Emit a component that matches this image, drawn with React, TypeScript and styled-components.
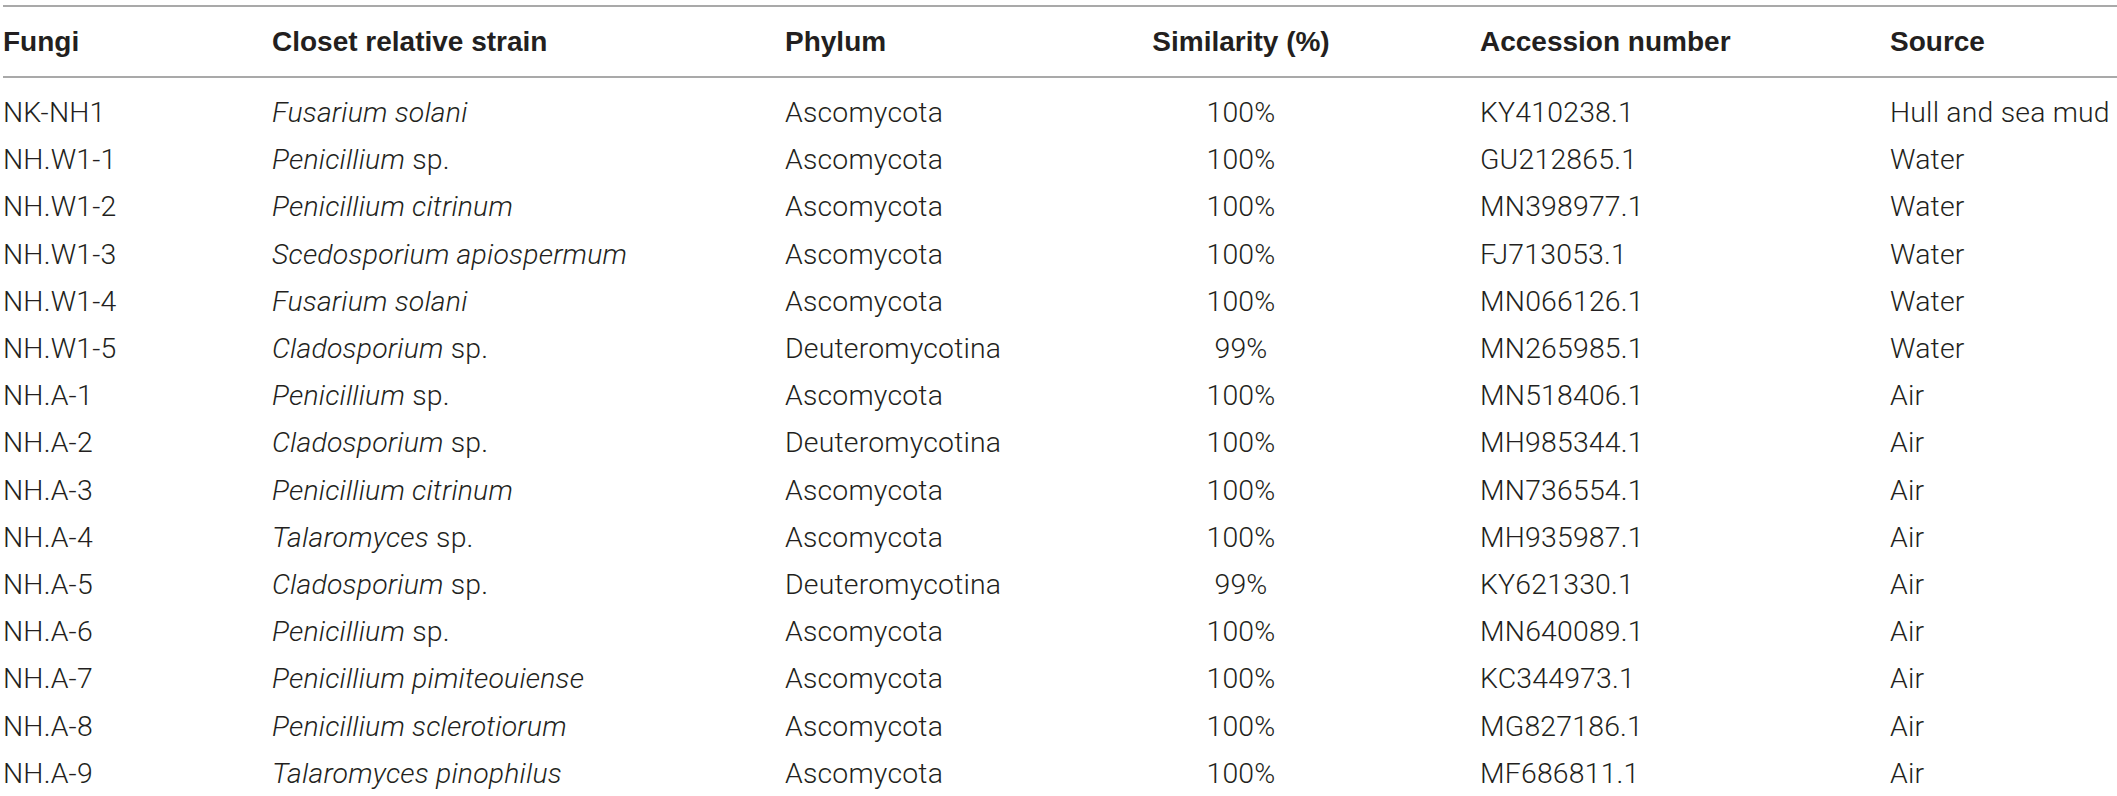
import React from "react";
import styled, { createGlobalStyle } from "styled-components";

const Global = createGlobalStyle`
  html, body {
    margin: 0;
    padding: 0;
    background: #ffffff;
    overflow: hidden;
  }
  body {
    font-family: "Liberation Sans", Arial, sans-serif;
    color: #231f20;
  }
`;

const Wrapper = styled.div`
  padding: 5px 0 0 3px;
  width: 2117px;
  box-sizing: border-box;
`;

const Table = styled.table`
  width: 100%;
  table-layout: fixed;
  border-collapse: separate;
  border-spacing: 0;
  font-size: 28px;
`;

const HeadCell = styled.th<{ $align?: string }>`
  text-align: ${(p) => p.$align || "left"};
  font-family: "Liberation Sans", Arial, sans-serif;
  font-weight: 700;
  line-height: 32px;
  padding: 19px 0 18px 0;
  border-top: 2px solid #a9a9a9;
  border-bottom: 2px solid #a9a9a9;
  white-space: nowrap;
  color: #231f20;
`;

const Row = styled.tr`
  &:first-child td {
    padding-top: 11px;
  }
`;

const Cell = styled.td<{ $align?: string }>`
  text-align: ${(p) => p.$align || "left"};
  font-family: Roboto, "Liberation Sans", Arial, sans-serif;
  font-weight: 300;
  font-size: 28.4px;
  letter-spacing: 0.2px;
  line-height: 47.2px;
  height: 47.2px;
  padding: 0;
  white-space: nowrap;
  color: #231f20;
`;

const Genus = styled.i`
  font-style: italic;
`;

type RowData = {
  id: string;
  strain: string;
  suffix?: string;
  phylum: string;
  sim: string;
  acc: string;
  source: string;
};

const rows: RowData[] = [
  { id: "NK-NH1", strain: "Fusarium solani", phylum: "Ascomycota", sim: "100%", acc: "KY410238.1", source: "Hull and sea mud" },
  { id: "NH.W1-1", strain: "Penicillium", suffix: " sp.", phylum: "Ascomycota", sim: "100%", acc: "GU212865.1", source: "Water" },
  { id: "NH.W1-2", strain: "Penicillium citrinum", phylum: "Ascomycota", sim: "100%", acc: "MN398977.1", source: "Water" },
  { id: "NH.W1-3", strain: "Scedosporium apiospermum", phylum: "Ascomycota", sim: "100%", acc: "FJ713053.1", source: "Water" },
  { id: "NH.W1-4", strain: "Fusarium solani", phylum: "Ascomycota", sim: "100%", acc: "MN066126.1", source: "Water" },
  { id: "NH.W1-5", strain: "Cladosporium", suffix: " sp.", phylum: "Deuteromycotina", sim: "99%", acc: "MN265985.1", source: "Water" },
  { id: "NH.A-1", strain: "Penicillium", suffix: " sp.", phylum: "Ascomycota", sim: "100%", acc: "MN518406.1", source: "Air" },
  { id: "NH.A-2", strain: "Cladosporium", suffix: " sp.", phylum: "Deuteromycotina", sim: "100%", acc: "MH985344.1", source: "Air" },
  { id: "NH.A-3", strain: "Penicillium citrinum", phylum: "Ascomycota", sim: "100%", acc: "MN736554.1", source: "Air" },
  { id: "NH.A-4", strain: "Talaromyces", suffix: " sp.", phylum: "Ascomycota", sim: "100%", acc: "MH935987.1", source: "Air" },
  { id: "NH.A-5", strain: "Cladosporium", suffix: " sp.", phylum: "Deuteromycotina", sim: "99%", acc: "KY621330.1", source: "Air" },
  { id: "NH.A-6", strain: "Penicillium", suffix: " sp.", phylum: "Ascomycota", sim: "100%", acc: "MN640089.1", source: "Air" },
  { id: "NH.A-7", strain: "Penicillium pimiteouiense", phylum: "Ascomycota", sim: "100%", acc: "KC344973.1", source: "Air" },
  { id: "NH.A-8", strain: "Penicillium sclerotiorum", phylum: "Ascomycota", sim: "100%", acc: "MG827186.1", source: "Air" },
  { id: "NH.A-9", strain: "Talaromyces pinophilus", phylum: "Ascomycota", sim: "100%", acc: "MF686811.1", source: "Air" },
];

export default function App() {
  return (
    <>
      <Global />
      <Wrapper>
        <Table>
          <colgroup>
            <col style={{ width: 269 }} />
            <col style={{ width: 513 }} />
            <col style={{ width: 217 }} />
            <col style={{ width: 478 }} />
            <col style={{ width: 410 }} />
            <col />
          </colgroup>
          <thead>
            <tr>
              <HeadCell>Fungi</HeadCell>
              <HeadCell>Closet relative strain</HeadCell>
              <HeadCell>Phylum</HeadCell>
              <HeadCell $align="center">Similarity (%)</HeadCell>
              <HeadCell>Accession number</HeadCell>
              <HeadCell>Source</HeadCell>
            </tr>
          </thead>
          <tbody>
            {rows.map((r) => (
              <Row key={r.id}>
                <Cell>{r.id}</Cell>
                <Cell>
                  <Genus>{r.strain}</Genus>
                  {r.suffix}
                </Cell>
                <Cell>{r.phylum}</Cell>
                <Cell $align="center">{r.sim}</Cell>
                <Cell>{r.acc}</Cell>
                <Cell>{r.source}</Cell>
              </Row>
            ))}
          </tbody>
        </Table>
      </Wrapper>
    </>
  );
}
